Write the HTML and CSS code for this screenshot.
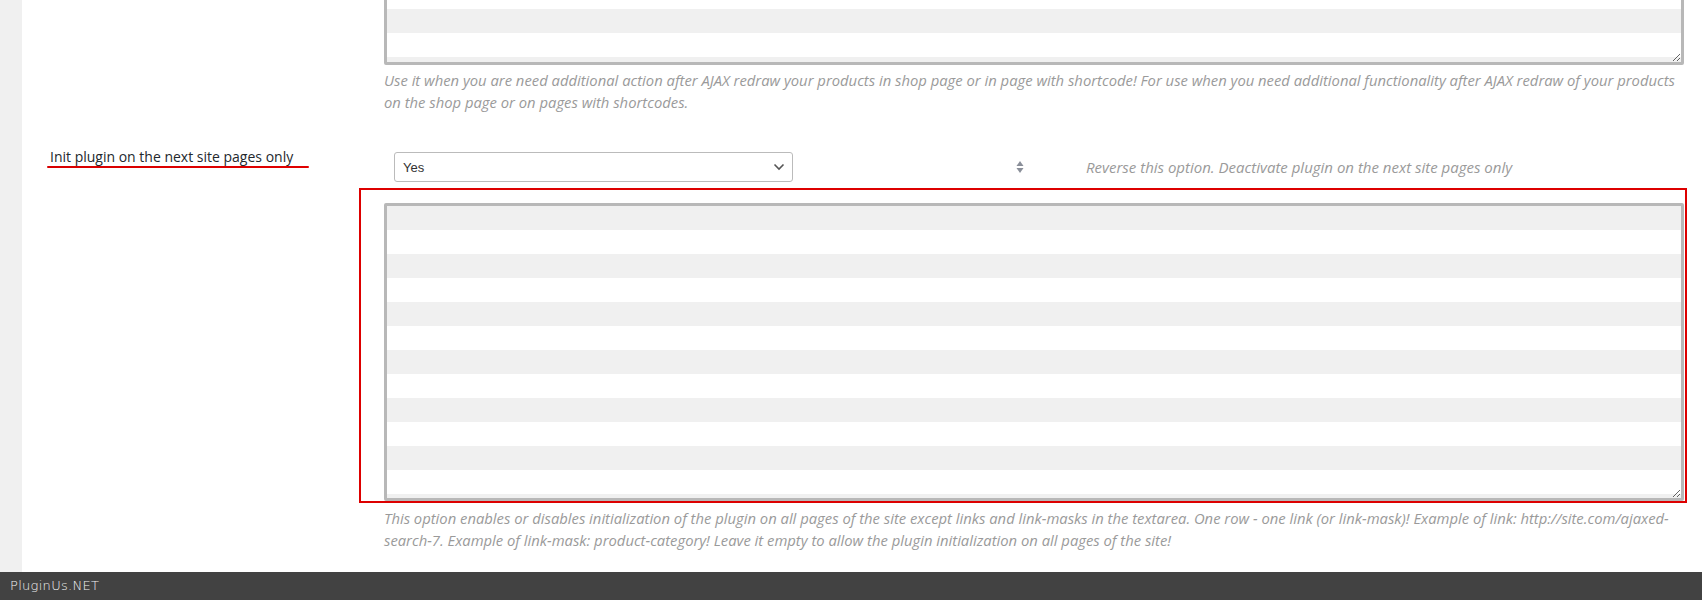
FILE: index.html
```html
<!DOCTYPE html>
<html lang="en">
<head>
<meta charset="utf-8">
<title>Settings</title>
<link rel="stylesheet" href="styles.css">
</head>
<body>
<div class="page">
  <aside class="sidebar"></aside>
  <main class="main">
    <div class="row row-first">
      <div class="label-cell"></div>
      <div class="field-cell">
        <textarea class="striped ta-top"></textarea>
        <p class="help">Use it when you are need additional action after AJAX redraw your products in shop page or in page with shortcode! For use when you need additional functionality after AJAX redraw of your products on the shop page or on pages with shortcodes.</p>
      </div>
    </div>
    <div class="row row-second">
      <div class="label-cell">
        <span class="label-text">Init plugin on the next site pages only</span>
        <div class="red-underline"></div>
      </div>
      <div class="field-cell">
        <div class="option-line">
          <div class="select">
            <span class="select-value">Yes</span>
            <svg class="chevron" width="12" height="8" viewBox="0 0 12 8"><path d="M1.5 1.5 L6 6 L10.5 1.5" fill="none" stroke="#555" stroke-width="1.6"/></svg>
          </div>
          <svg class="sort-icon" width="8" height="14" viewBox="0 0 8 14"><path d="M4 1 L7.5 6 L0.5 6 Z" fill="#8a8f99"/><path d="M0.5 8 L7.5 8 L4 13 Z" fill="#8a8f99"/></svg>
          <span class="option-desc">Reverse this option. Deactivate plugin on the next site pages only</span>
        </div>
        <div class="ta-wrap">
          <textarea class="striped ta-main"></textarea>
          <div class="red-box"></div>
        </div>
        <p class="help help-second">This option enables or disables initialization of the plugin on all pages of the site except links and link-masks in the textarea. One row - one link (or link-mask)! Example of link: http://site.com/ajaxed-search-7. Example of link-mask: product-category! Leave it empty to allow the plugin initialization on all pages of the site!</p>
      </div>
    </div>
  </main>
</div>
<footer class="footer">PluginUs.NET</footer>
</body>
</html>
```

FILE: styles.css
```css
html, body {
  margin: 0;
  padding: 0;
  height: 600px;
  overflow: hidden;
}
body {
  font-family: "Open Sans", "Liberation Sans", sans-serif;
  background: #fff;
}
.page {
  display: flex;
  height: 600px;
}
.sidebar {
  width: 22px;
  flex: none;
  background: #f0f0f0;
}
.main {
  flex: 1;
  background: #fff;
  padding-right: 18px;
}
.row {
  display: grid;
  grid-template-columns: 362px 1fr;
}
.label-cell {
  padding-left: 28px;
}
.field-cell {
  min-width: 0;
}
.striped {
  display: block;
  box-sizing: border-box;
  width: 100%;
  margin: 0;
  padding: 0;
  border: 3px solid #b8b8b8;
  border-radius: 2px;
  background: repeating-linear-gradient(to bottom, #f0f0f0 0, #f0f0f0 24px, #fff 24px, #fff 48px);
  outline: none;
  resize: both;
}
.ta-top {
  margin-top: -138px;
  height: 203px;
}
.help {
  margin: 4px 0 0;
  font-size: 14.8px;
  line-height: 22px;
  font-style: italic;
  color: #9a9a9a;
}
.row-second {
  padding-top: 34px;
}
.label-cell .label-text {
  display: block;
  font-size: 14px;
  line-height: 20px;
  color: #23282d;
  margin-top: 0;
}
.red-underline {
  width: 262px;
  height: 2px;
  margin-left: -3px;
  margin-top: -1px;
  background: linear-gradient(to right, #d80000, #e00000);
  border-radius: 1px;
}
.option-line {
  display: flex;
  align-items: center;
  height: 30px;
  margin-top: 5px;
}
.select {
  box-sizing: border-box;
  width: 399px;
  height: 30px;
  margin-left: 10px;
  border: 1px solid #bbb;
  border-radius: 3px;
  display: flex;
  align-items: center;
  justify-content: space-between;
  padding: 0 7px 0 8px;
  background: #fff;
}
.select-value {
  font-family: "Liberation Sans", Arial, sans-serif;
  font-size: 13px;
  color: #333;
}
.sort-icon {
  margin-left: 223px;
}
.option-desc {
  margin-left: 62px;
  font-size: 15px;
  font-style: italic;
  color: #9a9a9a;
}
.ta-wrap {
  position: relative;
  margin-top: 21px;
}
.ta-main {
  height: 298px;
}
.red-box {
  position: absolute;
  left: -25px;
  top: -15px;
  right: -3px;
  bottom: -2px;
  border: 2px solid #dd0000;
  pointer-events: none;
}
.help-second {
  margin-top: 6px;
}
.footer {
  position: fixed;
  left: 0;
  right: 0;
  bottom: 0;
  height: 28px;
  line-height: 28px;
  background: #424242;
  color: #f0f0f0;
  padding-left: 10px;
  font-family: "DejaVu Sans", Verdana, sans-serif;
  font-size: 13px;
  font-weight: 300;
  letter-spacing: 0.3px;
}
```
